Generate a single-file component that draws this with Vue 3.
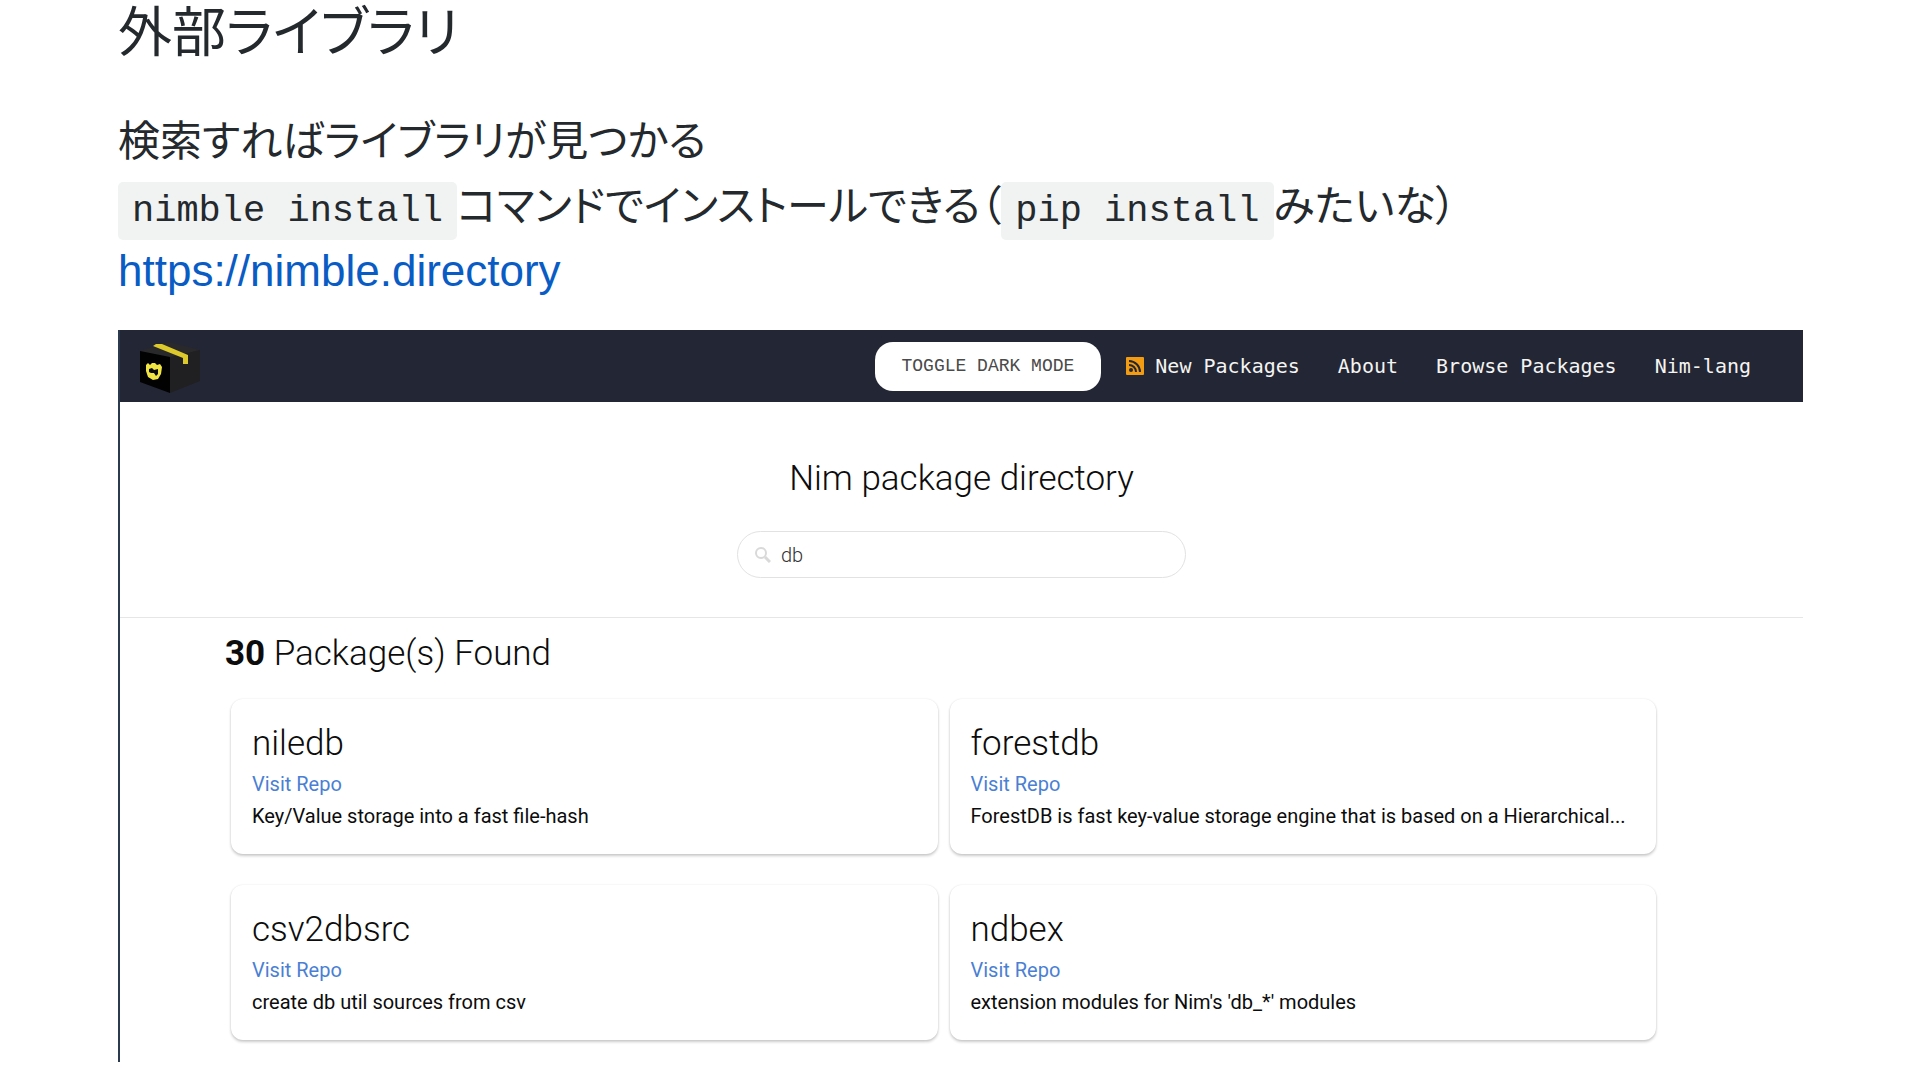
<script setup>
import { ref } from 'vue'

const query = ref('db')
const links = ['About', 'Browse Packages', 'Nim-lang']
const packages = [
  { name: 'niledb', text: 'Key/Value storage into a fast file-hash' },
  { name: 'forestdb', text: 'ForestDB is fast key-value storage engine that is based on a Hierarchical...' },
  { name: 'csv2dbsrc', text: 'create db util sources from csv' },
  { name: 'ndbex', text: "extension modules for Nim's 'db_*' modules" },
]
</script>

<template>
  <main class="slide" lang="ja">
    <h1 class="title">外部ライブラリ</h1>
    <p class="intro">
      検索すればライブラリが見つかる<br />
      <code>nimble install</code>コマンドでインストールできる（<code>pip install</code>みたいな）<br />
      <a href="https://nimble.directory">https://nimble.directory</a>
    </p>

    <section class="site" lang="en">
      <nav class="navbar">
        <a class="logo" href="#" aria-label="Nimble">
          <svg viewBox="0 0 62 54" width="62" height="54" aria-hidden="true">
            <path d="M1 12 30 3 61 11 32 19Z" fill="#29292b" />
            <path d="M31 18 61 11 61 42 31 54Z" fill="#202022" />
            <path d="M1 12 31 18 31 54 1 43Z" fill="#020202" />
            <path d="M14 7 17 5 23 5 49 16 49 25 44 25 44 19Z" fill="#dcc92c" />
            <path d="M7 26 9 24 11 26 13 24 16 24 18 26 21 25 23 28 22 35 19 40 14 41 9 38 7 32Z" fill="#f1e544" />
            <path d="M10 30 13 29 15 31 19 30 19 35 17 37 15 34 12 34 10 33Z" fill="#0a0a0a" />
          </svg>
        </a>
        <button class="toggle" type="button">TOGGLE DARK MODE</button>
        <a class="link feed" href="#">
          <svg viewBox="0 0 18 18" width="18" height="18" aria-hidden="true">
            <rect width="18" height="18" rx="1" fill="#f39c12" />
            <circle cx="5" cy="13" r="2" fill="#232634" />
            <path d="M3 8a7 7 0 0 1 7 7M3 4a11 11 0 0 1 11 11" fill="none" stroke="#232634" stroke-width="2" />
          </svg>
          New Packages
        </a>
        <a v-for="link in links" :key="link" class="link" href="#">{{ link }}</a>
      </nav>

      <header class="hero">
        <h2 class="heading">Nim package directory</h2>
        <label class="search">
          <svg viewBox="0 0 16 16" width="16" height="16" aria-hidden="true">
            <circle cx="6" cy="6" r="5" fill="none" stroke="#d9d9d9" stroke-width="2" />
            <path d="M10 10 15 15" stroke="#d9d9d9" stroke-width="3" />
          </svg>
          <input v-model="query" type="text" aria-label="Search packages" />
        </label>
      </header>

      <div class="results">
        <h2 class="heading"><strong>30</strong> Package(s) Found</h2>
        <div class="grid">
          <article v-for="item in packages" :key="item.name" class="card">
            <h3 class="heading">{{ item.name }}</h3>
            <a class="repo" href="#">Visit Repo</a>
            <p class="text">{{ item.text }}</p>
          </article>
        </div>
      </div>
    </section>
  </main>
</template>

<style>
body {
  margin: 0;
  background: #fff;
}
</style>

<style scoped>
.slide {
  box-sizing: border-box;
  padding: 0 117px 18px 118px;
  font-family: "Liberation Sans", "Noto Sans CJK JP", sans-serif;
  font-feature-settings: "palt";
  color: #24292e;
}
.title {
  margin: 0;
  padding-bottom: 43px;
  font-size: 54px;
  font-weight: 400;
  line-height: 66px;
}
.intro {
  margin: 0 0 26px;
  font-size: 42px;
  line-height: 65px;
}
.intro a {
  font-size: 44px;
  line-height: 1;
  color: #0a5cc5;
  text-decoration: none;
}
code {
  padding: 8px 14px;
  border-radius: 5px;
  background: #f1f3f3;
  font-family: "Liberation Mono", monospace;
  font-size: 37px;
  line-height: 1;
}
.site {
  border-left: 2px solid #2b3a4f;
  font-family: Roboto, sans-serif;
  font-feature-settings: normal;
  color: #0c0c0c;
}
.navbar {
  display: flex;
  align-items: center;
  height: 72px;
  padding: 0 52px 0 19px;
  background: #232634;
}
.logo {
  display: flex;
  margin-right: auto;
}
.toggle {
  height: 49px;
  margin-right: 25px;
  padding: 0 27px;
  border: 0;
  border-radius: 18px;
  background: #fff;
  font-family: "Liberation Mono", monospace;
  font-size: 18px;
  color: #4a4a4a;
}
.link {
  font-family: "DejaVu Sans Mono", monospace;
  font-size: 20px;
  color: #f4f4f2;
  text-decoration: none;
}
.link + .link {
  margin-left: 38px;
}
.feed {
  display: flex;
  align-items: center;
  gap: 11px;
}
.hero {
  display: flex;
  flex-direction: column;
  align-items: center;
  padding: 53px 0 39px;
  border-bottom: 1px solid #e6e6e6;
}
.heading {
  margin: 0;
  font-size: 35px;
  font-weight: 300;
  line-height: 48px;
}
.heading strong {
  font-weight: 700;
}
.search {
  box-sizing: border-box;
  display: flex;
  align-items: center;
  gap: 10px;
  width: 449px;
  height: 47px;
  margin-top: 28px;
  padding: 0 17px;
  border: 1px solid #e2e2e2;
  border-radius: 24px;
}
.search input {
  flex: 1;
  min-width: 0;
  padding: 0;
  border: 0;
  outline: 0;
  background: none;
  font-family: Roboto, sans-serif;
  font-size: 20px;
  font-weight: 300;
  color: #333;
}
.results {
  padding: 12px 147px 22px 105px;
}
.grid {
  display: grid;
  grid-template-columns: repeat(2, minmax(0, 1fr));
  gap: 31px 12px;
  margin-top: 21px;
  padding-left: 6px;
}
.card {
  box-sizing: border-box;
  height: 155px;
  padding: 21px;
  border-radius: 12px;
  box-shadow: 0 2px 3px rgba(0, 0, 0, 0.2), 0 0 2px rgba(0, 0, 0, 0.1);
}
.repo {
  display: block;
  font-size: 20px;
  line-height: 32px;
  color: #4a7fd4;
  text-decoration: none;
}
.text {
  margin: 0;
  overflow: hidden;
  font-size: 20px;
  line-height: 32px;
  white-space: nowrap;
  text-overflow: ellipsis;
}
</style>
